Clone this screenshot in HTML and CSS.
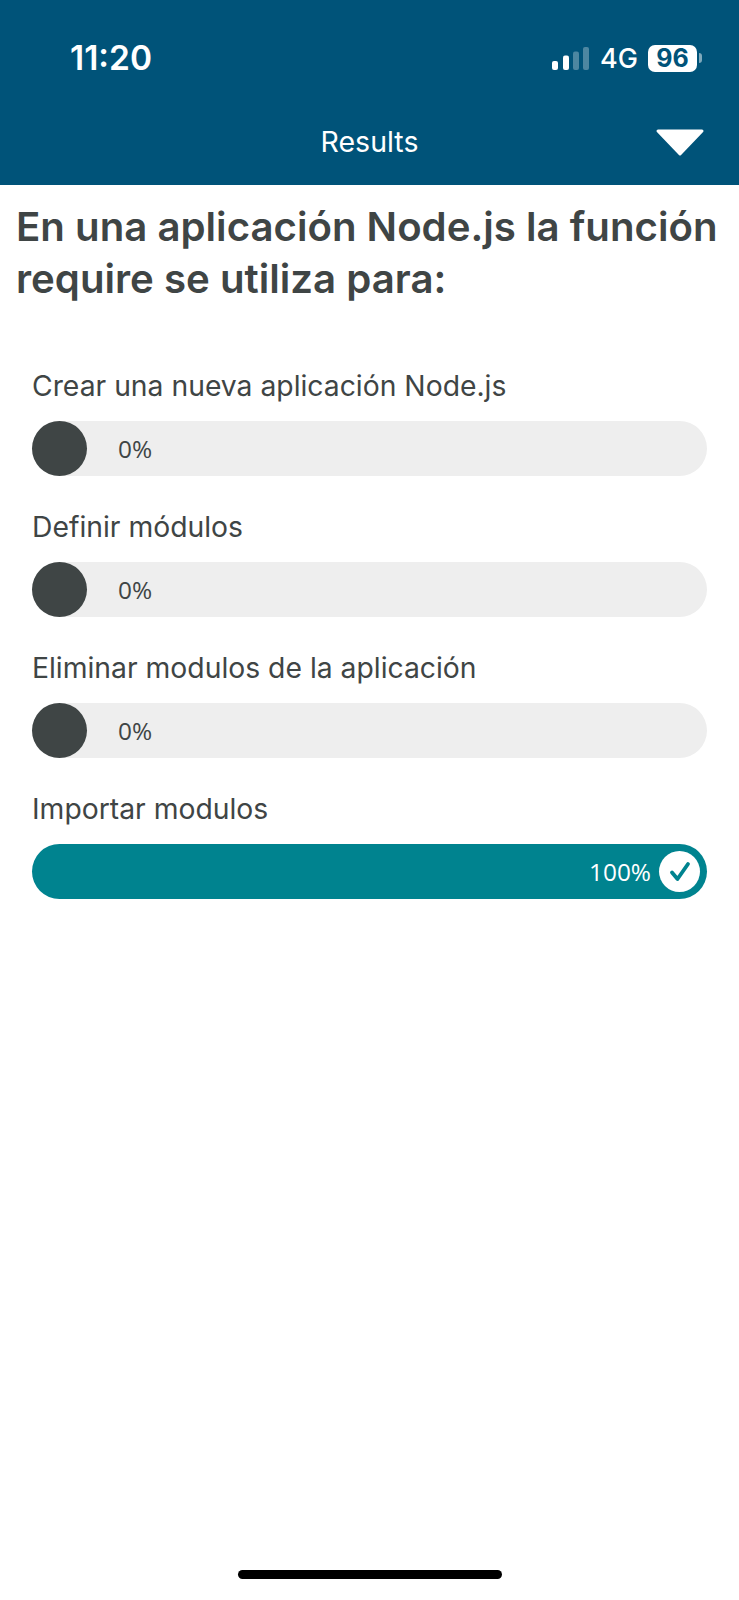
FILE: index.html
```html
<!DOCTYPE html>
<html lang="es">
<head>
    <meta charset="UTF-8">
    <meta name="viewport" content="width=device-width, initial-scale=1.0">
    <title>Results</title>

    <link rel="stylesheet" href="styles.css">
</head>
<body>
    <div class="pantalla">
        <header class="cabecera">
            <div class="estado">
                <span class="hora">11:20</span>
                <div class="estado-der">
                    <svg class="senal" width="38" height="24" viewBox="0 0 38 24">
                        <rect x="0" y="14" width="6" height="9" rx="2" fill="#fff"/>
                        <rect x="11" y="8.5" width="6" height="14.5" rx="2" fill="#fff"/>
                        <rect x="21" y="4.5" width="6" height="18.5" rx="2" fill="#fff" opacity="0.3"/>
                        <rect x="31" y="0" width="6" height="23" rx="2" fill="#fff" opacity="0.3"/>
                    </svg>
                    <span class="red">4G</span>
                    <span class="bateria">96</span>
                    <span class="bateria-punta"></span>
                </div>
            </div>
            <div class="titulo-barra">
                <span>Results</span>
                <svg class="flecha" width="50" height="28" viewBox="0 0 50 28">
                    <path d="M3 2 H47 L25 25 Z" fill="#fff" stroke="#fff" stroke-width="3" stroke-linejoin="round"/>
                </svg>
            </div>
        </header>

        <main class="contenido">
            <h1 class="pregunta">En una aplicación Node.js la función require se utiliza para:</h1>

            <div class="opciones">
                <div class="opcion">
                    <p class="texto">Crear una nueva aplicación Node.js</p>
                    <div class="barra">
                        <span class="punto"></span>
                        <span class="pct">0%</span>
                    </div>
                </div>
                <div class="opcion">
                    <p class="texto">Definir módulos</p>
                    <div class="barra">
                        <span class="punto"></span>
                        <span class="pct">0%</span>
                    </div>
                </div>
                <div class="opcion">
                    <p class="texto">Eliminar modulos de la aplicación</p>
                    <div class="barra">
                        <span class="punto"></span>
                        <span class="pct">0%</span>
                    </div>
                </div>
                <div class="opcion">
                    <p class="texto">Importar modulos</p>
                    <div class="barra correcta">
                        <span class="pct">100%</span>
                        <span class="check">
                            <svg width="22" height="21" viewBox="0 0 22 21">
                                <path d="M3 11.5 L8.5 18 L19 3" fill="none" stroke="#00838f" stroke-width="3.8" stroke-linecap="round" stroke-linejoin="round"/>
                            </svg>
                        </span>
                    </div>
                </div>
            </div>
        </main>

        <div class="home"></div>
    </div>
</body>
</html>
```

FILE: styles.css
```css
*{
    box-sizing: border-box;
}
body{
    margin: 0;
    background-color: #fff;
    font-family: Inter, "Liberation Sans", sans-serif;
    color: #3f4545;
}
.pantalla{
    display: flex;
    flex-direction: column;
    width: 739px;
    height: 1600px;
}
.cabecera{
    display: flex;
    flex-direction: column;
    height: 185px;
    padding-top: 38px;
    background-color: #005379;
    color: #fff;
}
.estado{
    display: flex;
    justify-content: space-between;
    align-items: center;
    height: 40px;
    padding: 0 36px 0 70px;
}
.hora{
    font-size: 33.5px;
    font-weight: 600;
}
.estado-der{
    display: flex;
    align-items: center;
}
.senal{
    margin-right: 10px;
    margin-top: 1px;
}
.red{
    font-size: 27px;
    font-weight: 500;
    margin-right: 10px;
}
.bateria{
    display: flex;
    justify-content: center;
    align-items: center;
    width: 49px;
    height: 27px;
    border-radius: 7px;
    background-color: #fff;
    color: #005379;
    font-size: 25px;
    font-weight: 700;
}
.bateria-punta{
    width: 3px;
    height: 10px;
    margin-left: 2px;
    margin-right: 1px;
    border-radius: 0 3px 3px 0;
    background-color: #7fa9bc;
}
.titulo-barra{
    position: relative;
    display: flex;
    justify-content: center;
    margin-top: 46px;
    font-size: 28.5px;
}
.flecha{
    position: absolute;
    right: 34px;
    top: 5px;
}
.contenido{
    flex: 1;
    padding: 0 32px;
}
.pregunta{
    margin: 16px -20px 0 -16px;
    font-size: 40.2px;
    font-weight: 600;
    line-height: 52px;
}
.opciones{
    display: flex;
    flex-direction: column;
    gap: 25px;
    margin-top: 55px;
}
.texto{
    margin: 0;
    font-size: 28.3px;
    line-height: 52px;
    margin-bottom: 9px;
    height: 52px;
}
.barra{
    display: flex;
    align-items: center;
    height: 55px;
    border-radius: 28px;
    background-color: #eeeeee;
    font-family: "Open Sans", sans-serif;
    font-size: 24.4px;
    font-weight: 400;
}
.punto{
    width: 55px;
    height: 55px;
    border-radius: 50%;
    background-color: #3f4545;
}
.pct{
    margin-left: 31px;
}
.correcta{
    justify-content: flex-end;
    padding-right: 7px;
    background-color: #00838f;
    color: #fff;
}
.correcta .pct{
    margin-right: 8px;
}
.check{
    display: flex;
    justify-content: center;
    align-items: center;
    width: 41px;
    height: 41px;
    border-radius: 50%;
    background-color: #fff;
}
.home{
    width: 264px;
    height: 9px;
    margin: 0 auto 21px;
    border-radius: 5px;
    background-color: #000;
}
```
